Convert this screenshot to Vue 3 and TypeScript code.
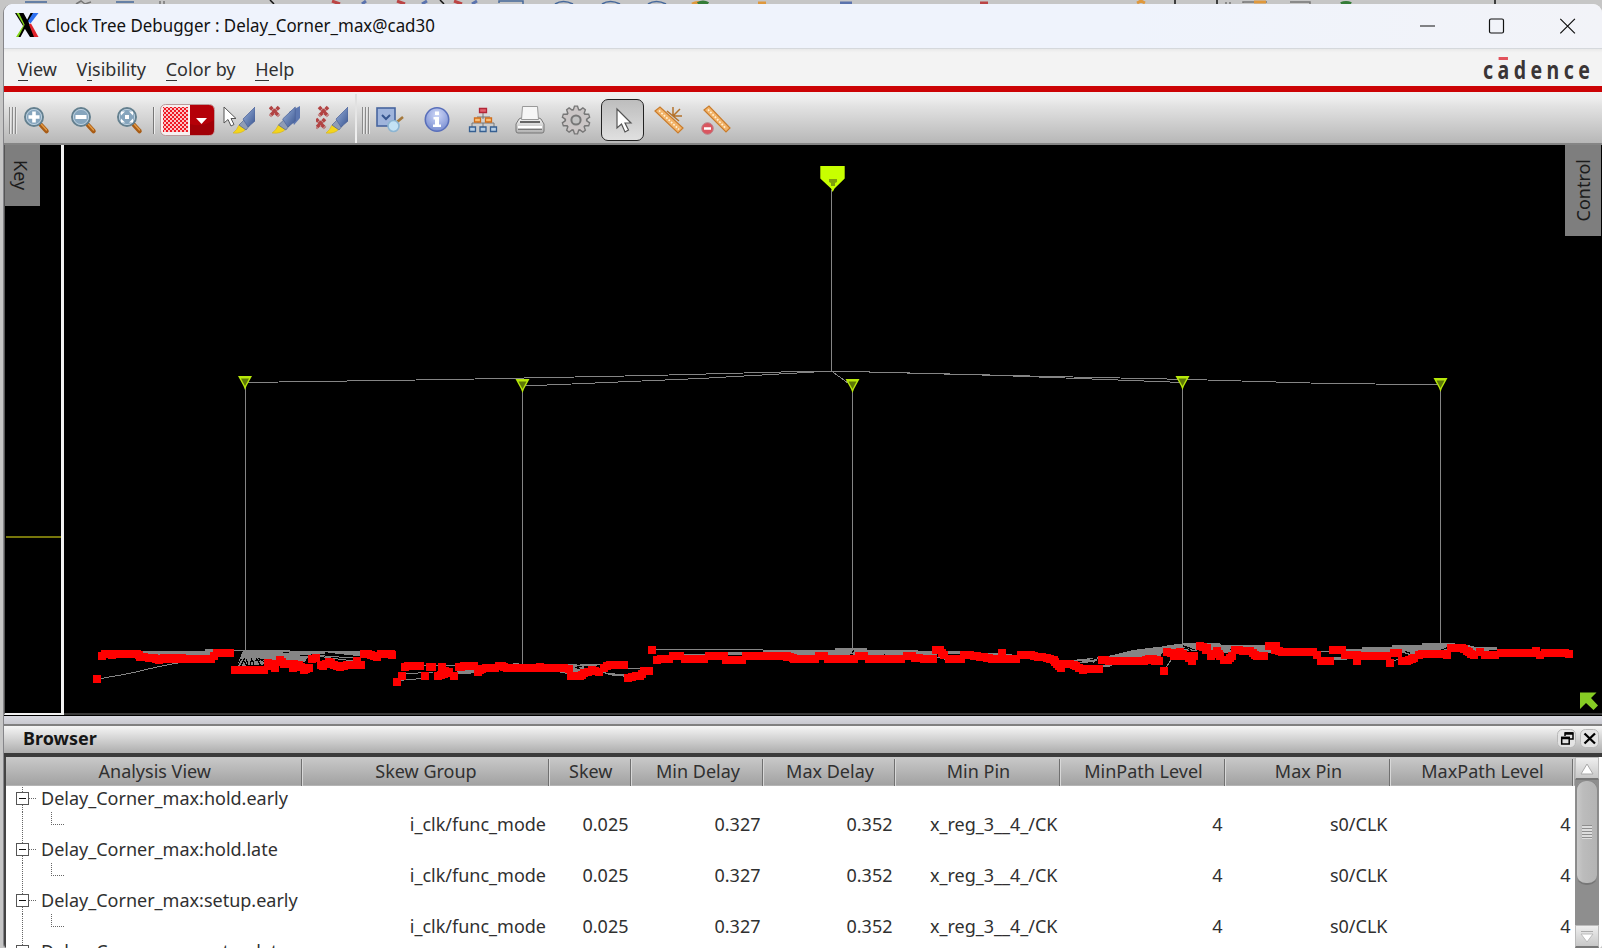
<script setup lang="ts">
interface Strip { dx: number; d: string }
interface Node { x: number; y: number; bottom: number }

const menus = [
  { key: 'V', before: '', after: 'iew' },
  { key: 'i', before: 'V', after: 'sibility' },
  { key: 'C', before: '', after: 'olor by' },
  { key: 'H', before: '', after: 'elp' },
]

const columns = ['Analysis View', 'Skew Group', 'Skew', 'Min Delay', 'Max Delay', 'Min Pin', 'MinPath Level', 'Max Pin', 'MaxPath Level']
const values = ['i_clk/func_mode', '0.025', '0.327', '0.352', 'x_reg_3__4_/CK', '4', 's0/CLK', '4']
const groups = ['hold.early', 'hold.late', 'setup.early', 'setup.late'].map(n => 'Delay_Corner_max:' + n)
const gearTeeth = [0, 36, 72, 108, 144]

const buffers: Node[] = [
  { x: 245, y: 376, bottom: 651 },
  { x: 522.5, y: 379, bottom: 664 },
  { x: 852.5, y: 379, bottom: 649 },
  { x: 1182.5, y: 376, bottom: 645 },
  { x: 1440.5, y: 378, bottom: 645 },
]

// Chains of sink centres, in thirds of a pixel from each strip's own origin.
const sinks: { dx: number; runs: string[] }[] = [
  { dx: 0, runs: ['305,77 315,71 335,73 350,70 410,70 420,80 445,82', '460,82 475,90 490,84 545,82', '500,87 632,87 640,76 650,67 690,69', '290,146', '705,119 790,119', '803,99 825,113', '814,100', '838,89 850,102 880,100', '877,113 895,105 910,118 925,112', '936,87 947,84', '962,104 968,108 985,95 1000,103 1020,110 1040,105 1082,104', '1070,92', '1092,70 1112,75 1130,80', '1142,70 1172,70 1176,73'] },
  { dx: 380, runs: ['50,155', '64,137', '75,110 90,106 120,106', '148,110 156,110', '135,137', '185,110', '195,122', '172,137 190,130 205,125', '220,137', '235,110 250,108 280,106', '292,124 305,115 345,112', '355,108 365,107 380,112 565,115', '478,110', '572,138 598,138 610,128 635,120 656,124', '672,112 690,105 730,105', '742,142 755,140 778,137 790,123 807,123', '815,60', '830,88 865,87', '878,77 900,77', '915,87 970,87', '985,77 1030,77', '1037,88 1085,88', '1098,77 1220,78 1240,85 1260,87'] },
  { dx: 780, runs: ['0,77 30,81 45,87 105,87', '116,77 130,77', '142,87 222,87', '235,77 252,77', '265,87 362,87', '380,77 395,77 405,82 430,87 457,87', '467,60 480,60 492,75', '507,87 542,87', '552,74 580,76 600,81 620,82 635,87 708,87', '664,69', '722,73 742,74 760,77 800,84 820,89 830,100 843,114', '852,100 880,104 895,112', '907,120', '915,115 956,115', '964,88 985,92 1090,92 1105,87 1130,88', '1150,123'] },
  { dx: 1140, runs: ['0,92 35,90 55,92', '80,65 92,68', '105,72 120,64 135,77 155,92', '100,77 162,77', '178,47 200,52', '198,60', '213,77 230,63 240,77', '250,88 263,88 274,78', '285,60 330,62 345,75', '350,78 370,78', '386,47 407,47', '405,60 425,65 518,66 530,73', '543,92 570,92', '578,59 605,60', '614,75 650,75', '650,92', '660,77 740,78', '748,97', '760,69 772,69', '785,93 800,93 815,85 822,84', '835,75 845,70 905,70 919,75', '933,52 965,53 980,62 992,70', '1002,73', '1020,65', '1035,74 1065,74', '1082,67 1175,68', '1187,61', '1200,73', '1215,68 1285,70'] },
]

// Stamps one square marker per step along a chain of points.
function stamp(run: string): string {
  const pts = run.split(' ').map(p => p.split(',').map(Number))
  const out: string[] = []
  const put = (x: number, y: number) => out.push(`M${Math.round((x - 11.5) / 3) * 3} ${Math.round((y - 11.5) / 3) * 3}h23v23h-23z`)
  put(pts[0][0], pts[0][1])
  for (let i = 1; i < pts.length; i++) {
    const [ax, ay] = pts[i - 1]
    const [bx, by] = pts[i]
    const n = Math.max(1, Math.ceil(Math.hypot(bx - ax, by - ay) / 14))
    for (let k = 1; k <= n; k++) put(ax + ((bx - ax) * k) / n, ay + ((by - ay) * k) / n)
  }
  return out.join('')
}
const sinkPaths: Strip[] = sinks.map(s => ({ dx: s.dx, d: s.runs.map(stamp).join('') }))

const fans: Strip[] = [
  { dx: 0, d: 'M415 62H615V57H640V80H430ZM730 60L870 59L872 63H1088V80L1000 70L930 72L915 95L800 88L790 104L710 108Z' },
  { dx: 380, d: 'M230 117L290 115V130L230 132ZM568 105H612V120L570 130ZM525 124H565V133ZM900 72H980V80H905ZM1030 67H1085V76H1035ZM1150 60H1260V84L1150 71ZM400 98h18v4h-18zM665 126L735 134V140L690 136Z' },
  { dx: 780, d: 'M0 60H165V54H262V60H380L470 64V84H0ZM495 62H565V72H495ZM600 68L664 70L720 76V84H600ZM855 92L955 82L1000 75L1060 60L1140 50L1250 40V64H1150L1140 80H960L940 100L880 98ZM965 104H1000L985 112H965Z' },
  { dx: 1140, d: 'M0 58L55 52L90 45L130 40H240L245 44L380 46V54L408 62V68H300L270 70L200 62L140 56L100 64L0 82ZM570 58H665V50H755L758 45H845V40H940L1000 48L1005 52H1070V57H1135V60H1070L1000 65L920 66L905 62H850L820 78L780 66H640L590 64ZM580 82H620V89H580Z' },
]

const fineLines: Strip[] = [
  { dx: 0, d: 'M300 146L390 130L440 118L500 105L535 99M695 62H735M890 72L1060 84M950 78L1080 96' },
  { dx: 380, d: 'M60 151L100 148L140 143M70 131L160 127M75 106H240M600 104H660M690 117H780M690 133H740M815 60H1150M560 104L650 107' },
  { dx: 780, d: 'M1158 113L1172 90M465 80L495 88M860 92L950 92' },
  { dx: 1140, d: 'M78 113L92 92M245 46H380M300 54H400M540 66H580M570 87H640M750 96L780 86M770 70L790 60' },
]

const gaps: Strip[] = [
  { dx: 0, d: 'M712 108L724 86M722 108L734 84M733 92L740 108M744 108L740 88M750 106L756 84M762 106L758 90M768 84L782 106M776 84L796 98M764 92L792 88M848 68H868M895 74L925 78M975 69H985M1000 78L1060 90M930 74L1060 76' },
  { dx: 380, d: 'M585 112L605 110M590 116H600' },
  { dx: 780, d: 'M216 68L222 62M210 75H218M312 73h4M895 95L915 91M925 92L950 84M925 97H940' },
  { dx: 1140, d: 'M125 60L140 52M138 52L155 66M130 48L165 60M270 58L300 62M905 60L925 52M795 64L810 70' },
]
</script>

<template>
  <div class="desktop">
    <svg class="behind" width="1602" height="6" viewBox="0 0 1602 6">
      <g fill="none" stroke-width="1.5">
        <path stroke="#47699b" d="M25 2h22M116 2h18M499 3V1h24v3M555 4q8-5 18 0M602 4q8-5 18 0M648 4q8-5 18 0" />
        <path stroke="#777" d="M76 4l5-3 4 3 6-2M1243 3V2h24M1290 2h20v2M1226 2v2M1230 2v2M160 1v3M164 1v3" />
        <path stroke="#b44" stroke-width="3" d="M332 1l8 3M397 1l8 3M454 1l8 3M980 3h8" />
        <path stroke="#5b73ad" stroke-width="3" d="M362 4l4-3M422 4l5-3M472 4l5-3M840 3h12" />
        <path stroke="#111" d="M1175 0v4M1217 0v4M1495 0v5M270 0l4 4M440 0l4 4" />
        <path stroke="#df983c" stroke-width="3" d="M692 4q6-3 10 0M758 3h8M1137 3l4-2 4 2M1254 2h12" />
        <path stroke="#347c37" stroke-width="4" d="M698 4q5-3 10 0M1341 4q5-2 10 0" />
      </g>
    </svg>
    <div class="window">
      <header class="titlebar">
        <svg class="xlogo" width="24" height="24" viewBox="0 0 24 24">
          <path fill="#000" d="M0 0h7.500l14.500 24h-7z" />
          <path fill="#83d61b" d="M1.500 0h3L11.500 12 4.500 24H1l7.500-12z" />
          <path fill="#000" d="M4 0h4.500l13 24h-6zM15.500 0h3L5.500 24h-2z" />
          <path fill="#2d70f0" d="M18 0h5.500L15.500 10.500 13 8z" />
          <path fill="#e0242c" d="M14 11.500l2-1L23.500 24H19z" />
        </svg>
        <span class="caption">Clock Tree Debugger : Delay_Corner_max@cad30</span>
        <svg class="winbtns" width="160" height="20" viewBox="0 0 160 20" fill="none" stroke="#111" stroke-width="1.2">
          <path d="M3 10h15" />
          <rect x="72.5" y="3" width="14" height="14" rx="1.5" />
          <path d="M143.300 2.800l14.600 14.600M157.900 2.800l-14.600 14.600" />
        </svg>
      </header>

      <nav class="menubar">
        <span v-for="m in menus" :key="m.key" class="menu">{{ m.before }}<span class="mnemonic">{{ m.key }}</span>{{ m.after }}</span>
        <span class="brand"><span class="brand-text">c<span class="macron">a</span>dence</span></span>
      </nav>

      <svg class="defs" width="0" height="0">
        <defs>
          <linearGradient id="brush" x1="0" y1="0" x2="1" y2="1"><stop offset="0" stop-color="#9bb3dc" /><stop offset="1" stop-color="#3b5691" /></linearGradient>
          <linearGradient id="metal" x1="0" y1="0" x2="0" y2="1"><stop offset="0" stop-color="#fafafa" /><stop offset="1" stop-color="#b0b0b0" /></linearGradient>
          <radialGradient id="info" cx=".5" cy=".3" r=".8"><stop offset="0" stop-color="#d0d8f8" /><stop offset="1" stop-color="#6c83cb" /></radialGradient>
          <pattern id="mesh" width="4" height="4" patternUnits="userSpaceOnUse"><path fill="#fbc4c6" d="M0 0h4v4H0z" /><path fill="#f01822" d="M0 0h2v2H0zM2 2h2v2H2z" /></pattern>
          <g id="lens">
            <path stroke="#a85c16" stroke-width="4.500" stroke-linecap="round" d="M22 21l5.500 6" />
            <path stroke="#e39a44" stroke-width="1.500" stroke-linecap="round" d="M22.500 20.500l5 5.500" />
            <circle cx="15" cy="13" r="9" fill="#86a5bd" stroke="#64808f" stroke-width="2" />
            <circle cx="15" cy="13" r="7.600" fill="none" stroke="#bcd0df" stroke-width="1" />
          </g>
          <g id="pen">
            <path fill="#f4d51c" stroke="#d4b422" stroke-width=".7" d="M0 27q4-3 6-8l7 4q-4 5-13 4z" />
            <path fill="#8f9cb5" stroke="#54678f" stroke-width=".7" d="M6 19l5-5 6 5-4 5z" />
            <path fill="url(#brush)" stroke="#4a6299" stroke-width=".7" d="M10 13L22 1v14l-7 6z" />
          </g>
          <path id="cross" fill="none" stroke="#b24343" stroke-width="3.600" stroke-dasharray="3.400 .6" d="M0 0l9 9M9 0L0 9" />
        </defs>
      </svg>

      <div class="toolbar">
        <i class="grip" />
        <span class="tool"><svg viewBox="0 0 32 32"><use href="#lens" /><path stroke="#fff" stroke-width="3.600" d="M9.500 13h11M15 7.500v11" /></svg></span>
        <span class="tool"><svg viewBox="0 0 32 32"><use href="#lens" /><path stroke="#fff" stroke-width="4" d="M9.500 13h11" /></svg></span>
        <span class="tool"><svg viewBox="0 0 32 32"><use href="#lens" /><path fill="#fff" d="M9 7.500h4l-4 4zM21 7.500v4l-4-4zM9 18.500v-4l4 4zM21 18.500h-4l4-4zM13 11h4v4h-4z" /></svg></span>
        <i class="rule" />
        <span class="swatch">
          <svg width="55" height="32" viewBox="0 0 55 32">
            <rect x=".5" y=".5" width="54" height="31" rx="5" fill="#f6f0f0" stroke="#b99" />
            <path fill="#b50008" d="M30 1h19q5 0 5 5v20q0 5-5 5H30z" />
            <path fill="#8d0006" d="M30 20q12 4 24-4v10q0 5-5 5H30z" opacity=".5" />
            <rect x="3" y="3" width="25" height="25" fill="url(#mesh)" shape-rendering="crispEdges" />
            <path fill="#fff" d="M36 14h11l-5.500 6z" />
          </svg>
        </span>
        <span class="tool"><svg viewBox="0 0 32 32"><path fill="#fff" stroke="#555" d="M1 3v16l4-3.500 3 6.500 3-1.500-3-6h5z" /><use href="#pen" x="10" y="2" /></svg></span>
        <span class="tool"><svg viewBox="0 0 32 32"><use href="#cross" x="1" y="3" /><path fill="#5d77b0" d="M20 8l11-6v12l-6 7z" /><use href="#pen" x="3" y="2" transform="scale(1.050 1)" /></svg></span>
        <span class="tool"><svg viewBox="0 0 32 32"><use href="#cross" x="3" y="3" /><use href="#cross" x="0" y="15" /><use href="#pen" x="10" y="2" /></svg></span>
        <i class="seam" />
        <i class="grip second" />
        <span class="tool"><svg viewBox="0 0 32 32"><rect x="3" y="4" width="18" height="18" fill="#9fb4dc" stroke="#47659f" stroke-width="1.600" /><path fill="none" stroke="#36558f" stroke-width="2" d="M8 11l4 4 4-4" /><path stroke="#a5793c" stroke-width="2.600" d="M23 18l6-5" /><circle cx="19.500" cy="22" r="5.500" fill="#c4e2f4" stroke="#8db5d2" stroke-width="1.600" /></svg></span>
        <span class="tool"><svg viewBox="0 0 32 32"><circle cx="16" cy="15.500" r="11.700" fill="url(#info)" stroke="#596fba" stroke-width="1.600" /><path fill="#fff" d="M14 7.500h4V11h-4zM12.500 13H18v7.500h2V23h-8v-2.500h2v-5h-1.500z" /></svg></span>
        <span class="tool"><svg viewBox="0 0 32 32"><path fill="none" stroke="#777" d="M16 9v6M10 13h13M5 23v-4h6M27 23v-4h-6M16 23v-4M11 15v4h10v-4" /><g stroke-width="1.300"><path fill="#e2606c" stroke="#b22637" d="M12.500 4.500h7v4h-7z" /><path fill="#f9bd73" stroke="#cf6d1b" d="M7.500 14h6v4h-6zM18.500 14h6v4h-6z" /><path fill="#b4cde5" stroke="#365f91" d="M2.500 23h6v4.500h-6zM13 23h6v4.500h-6zM23.500 23h6v4.500h-6z" /></g></svg></span>
        <span class="tool"><svg viewBox="0 0 32 32"><path fill="url(#metal)" stroke="#777" d="M5 15l4-2h14l4 2 3 5v7q0 2-2 2H4q-2 0-2-2v-7z" /><path fill="#f6f6f6" stroke="#999" d="M8.500 2.500h15l1 13h-17z" /><path stroke="#666" stroke-width="2" d="M6 18h20" /><path stroke="#fff" stroke-width="2" d="M4 23h24" /><path stroke="#777" d="M4 25.500h24" /></svg></span>
        <span class="tool"><svg viewBox="0 0 32 32">
          <path v-for="a in gearTeeth" :key="'o' + a" fill="#777" d="M12.500 6L14 1.500h4L19.500 6v20L18 30.500h-4L12.500 26z" :transform="`rotate(${a} 16 16)`" />
          <circle cx="16" cy="16" r="11.400" fill="#777" />
          <path v-for="a in gearTeeth" :key="'i' + a" fill="#cbc6c6" d="M14 6l1-3.200h2L18 6v20l-1 3.200h-2L14 26z" :transform="`rotate(${a} 16 16)`" />
          <circle cx="16" cy="16" r="10" fill="#cbc6c6" />
          <circle cx="16" cy="16" r="4.600" fill="#c2c2c2" stroke="#777" stroke-width="2" />
        </svg></span>
        <span class="tool pressed"><svg viewBox="0 0 32 32"><path fill="#fff" stroke="#555" stroke-width="1.200" d="M10 5v19l4.500-4 3.500 8 3.500-2-3.500-7h6z" /></svg></span>
        <span class="tool"><svg viewBox="0 0 32 32"><path fill="#f2b369" stroke="#c97c2c" stroke-width="1.200" d="M2 7l5-4 23 21-5 5z" /><path stroke="#fff0d4" stroke-width="1.700" stroke-dasharray="1.800 1.500" d="M6 6.500l20 19" /><path stroke="#b4722b" stroke-width="1.500" d="M20 12V3M20 12l7-7M20 12h9M20 12l-6-5M20 12l6 5" /></svg></span>
        <span class="tool"><svg viewBox="0 0 32 32"><path fill="#f2b369" stroke="#c97c2c" stroke-width="1.200" d="M4 6l5-4 21 22-4 4z" /><path stroke="#fff0d4" stroke-width="1.700" stroke-dasharray="1.800 1.500" d="M8 5.500l18 19" /><circle cx="7.500" cy="24.500" r="5.800" fill="#d95660" stroke="#bc8288" /><path stroke="#fff" stroke-width="2.600" d="M4 24.500h7" /></svg></span>
      </div>

      <main class="views">
        <aside class="keypane"><span class="tab left"><span class="vert">Key</span></span><i class="level" /></aside>
        <section class="canvas">
          <svg class="tree" width="1538" height="568" viewBox="64 144 1538 568">
            <g fill="none" stroke="#858585" shape-rendering="crispEdges">
              <path d="M831.500 190V371M245 382.500L450 379.500L650 375.500L800 371.500H832M522 386L560 384.500L700 378.500L832 371M832 371.500L848 383M832 371.500H850L1000 375.500L1183 382.500M850 371.500L1050 376.500L1190 379.500L1310 383L1440 385" />
              <path v-for="b in buffers" :key="b.x" :d="`M${b.x} ${b.y}V${b.bottom}`" />
            </g>
            <g v-for="(f, i) in fans" :key="'f' + i" :transform="`translate(${f.dx} 630) scale(.33333)`" shape-rendering="crispEdges">
              <path :d="f.d" fill="#858585" />
              <path :d="gaps[i].d" fill="none" stroke="#000" stroke-width="3.500" />
              <path :d="fineLines[i].d" fill="none" stroke="#858585" stroke-width="3" />
            </g>
            <path v-for="(s, i) in sinkPaths" :key="'s' + i" :d="s.d" :transform="`translate(${s.dx} 630) scale(.33333)`" fill="#f00" shape-rendering="crispEdges" />
            <path fill="#c8ff00" d="M820.300 166h24.400v12.500L834.500 188.500 832.700 192 831 188.500 820.300 178.500z" />
            <path fill="#7f9f0c" d="M829 179h8v3l-2 1v3h-4v-3l-2-1z" />
            <g v-for="b in buffers" :key="'b' + b.x">
              <path fill="#b7e80a" :d="`M${b.x - 7} ${b.y}h14l-5.500 10-1.500 4-1.500-4z`" />
              <path fill="#5e7807" :d="`M${b.x - 4} ${b.y + 2.5}h8l-4 7.500z`" />
            </g>
            <path fill="#86cc24" d="M1580 692.500h16.500l-5.500 5.500 7 7.500-4.500 4.500-7.500-7-6 6z" />
          </svg>
          <span class="tab right"><span class="vert up">Control</span></span>
        </section>
      </main>

      <section class="browser">
        <div class="dock">
          <span>Browser</span>
          <svg width="42" height="20" viewBox="0 0 42 20">
            <rect x=".5" y=".5" width="18" height="18" rx="5" fill="#e4e4e4" stroke="#b8b8b8" />
            <rect x="23.500" y=".5" width="18" height="18" rx="5" fill="#e4e4e4" stroke="#b8b8b8" />
            <path fill="none" stroke="#000" stroke-width="1.500" d="M8 7V4h8v6h-3M4.700 8.500h7.500V15H4.700z" />
            <path stroke="#000" stroke-width="2.500" d="M8 4.500h8M4 9h9" />
            <path stroke="#000" stroke-width="2.300" d="M27.500 4.500l10.500 10M38 4.500l-10.500 10" />
          </svg>
        </div>
        <div class="tablewrap">
          <div class="table">
            <div class="row head"><span v-for="c in columns" :key="c" class="th">{{ c }}</span></div>
            <div class="body">
              <template v-for="g in groups" :key="g">
                <div class="group">
                  <svg width="35" height="26" viewBox="0 0 35 26" shape-rendering="crispEdges">
                    <path fill="none" stroke="#666" stroke-dasharray="1 1" d="M16.500 1V26M23 12.500h8" />
                    <rect x="10.500" y="6.500" width="12" height="12" fill="#fff" stroke="#555" />
                    <path stroke="#111" stroke-width="1.500" d="M13 12.500h7" />
                  </svg><span>{{ g }}</span>
                </div>
                <div class="row">
                  <span class="branch"><svg width="70" height="26" viewBox="0 0 70 26" shape-rendering="crispEdges"><path fill="none" stroke="#666" stroke-dasharray="1 1" d="M16.500 0V26M45.500 0V12.500H59" /></svg></span>
                  <span v-for="(v, i) in values" :key="i" class="td">{{ v }}</span>
                </div>
              </template>
            </div>
          </div>
          <div class="scroll">
            <span class="arrow"><svg width="22" height="22" viewBox="0 0 22 22"><path fill="#fff" stroke="#aaa" d="M5 16L11 6l6 10z" /></svg></span>
            <span class="track"><span class="thumb"><i /></span></span>
            <span class="arrow"><svg width="22" height="22" viewBox="0 0 22 22"><path stroke="#aaa" d="M5 5.500h12" /><path fill="#fff" stroke="#bbb" d="M5 8h12l-6 8z" /></svg></span>
          </div>
        </div>
      </section>
    </div>
  </div>
</template>

<style>
html, body { margin: 0; overflow: hidden; }
</style>

<style scoped>
* { box-sizing: border-box; }
.desktop { position: relative; width: 1602px; height: 948px; padding: 4px 0 0 3px; overflow: hidden; background: #c6c6c6; font: 18px/25px "Noto Sans", "Open Sans", sans-serif; color: #303030; white-space: nowrap; }
.behind { position: absolute; left: 0; top: 0; }
.window { position: relative; display: flex; flex-direction: column; width: 1599px; height: 943.500px; overflow: hidden; border-left: 1px solid #858589; border-radius: 9px 9px 4px 4px; background: #f3f3f3; }
.titlebar { display: flex; align-items: center; flex: none; height: 45px; padding: 0 25px 0 11px; background: linear-gradient(90deg, #eff3fc 70%, #f2f3f8); border-bottom: 1px solid #d5d8dc; }
.xlogo { flex: none; margin-top: -2px; }
.caption { margin-left: 6px; margin-top: -2px; font-size: 17.600px; color: #111; transform: scaleX(.961); transform-origin: left; }
.winbtns { margin-left: auto; margin-top: -1px; }
.menubar { display: flex; align-items: center; flex: none; height: 37px; padding: 4px 9px 0 13.500px; background: linear-gradient(#e9e9e9, #f3f3f3 10%); }
.menu { margin-right: 19.700px; }
.mnemonic { box-shadow: 0 -1px 0 #333 inset; }
.brand { position: relative; width: 113px; height: 30px; margin-left: auto; }
.brand-text { position: absolute; left: 3px; top: 0; font-size: 25px; line-height: 28px; font-weight: 700; letter-spacing: 5.700px; transform: scaleX(.78); transform-origin: left; color: #3a3536; }
.macron { position: relative; }
.macron::before { content: ""; position: absolute; left: 1px; top: 5px; width: 12px; height: 3px; background: #e2525c; }
.defs { position: absolute; }
.toolbar { display: flex; align-items: center; flex: none; height: 59px; padding: 10px 0 0 4px; border-top: 6px solid #cc0305; border-bottom: 2px solid #858585; background: linear-gradient(#f1f1f1 0, #eee 12%, #e2e2e2 28%, #b7b7b7 100%); }
.grip { flex: none; width: 9px; height: 27px; margin: 0 -6px 5px 1px; background: repeating-linear-gradient(90deg, #8a8a8a 0 1px, #e8e8e8 1px 2px, transparent 2px 3px); }
.second { margin-right: -4px; }
.tool { display: flex; justify-content: center; align-items: center; flex: none; width: 46.500px; height: 42px; margin-bottom: 6px; }
.tool svg { width: 32px; height: 32px; }
.rule { width: 2px; height: 27px; margin: 0 5.500px 5px 1px; background: linear-gradient(90deg, #777 50%, #eee 50%); }
.swatch { width: 55.500px; height: 32px; margin-bottom: 6px; }
.seam { align-self: stretch; width: 2px; margin: -8px 4px 0 0; background: linear-gradient(#ddd, #f2f2f2); }
.pressed { width: 43px; margin: 0 2px 6px 1.500px; border: 1.500px solid #222; border-radius: 7px; background: linear-gradient(#bdbdbd, #e0e0e0); }
.views { display: flex; flex: none; height: 571px; background: #000; border-bottom: 1px solid #000; }
.keypane { position: relative; flex: none; width: 60px; border-right: 3px solid #f2f2f2; border-bottom: 2px solid #f2f2f2; border-left: 1px solid #555; }
.tab { display: flex; justify-content: center; align-items: center; background: #7e7e7e; color: #1c1c1c; }
.left { width: 35px; height: 61px; padding: 0 5px 1px 0; }
.vert { writing-mode: vertical-rl; }
.up { transform: rotate(180deg); }
.level { position: absolute; left: 1px; top: 391px; width: 55px; height: 2px; background: #77760b; }
.canvas { position: relative; flex: 1; border-bottom: 2px solid #3a3a3a; }
.tree { display: block; margin-top: -1px; }
.right { position: absolute; right: 1px; top: 0; width: 36px; height: 91px; padding: 0 0 1px 1px; }
.browser { display: flex; flex-direction: column; flex: 1; min-height: 0; padding-top: 8px; background: linear-gradient(#d9dae1 0, #c9c9d0 8px, #fff 8px); }
.dock { display: flex; align-items: center; flex: none; height: 33px; padding: 0 3px 2px 19px; border-top: 2px solid #808080; border-bottom: 4px solid #3b3b3b; background: linear-gradient(#f6f6f6, #adadad); font-weight: 700; color: #161616; }
.dock svg { margin-left: auto; }
.tablewrap { display: flex; flex: 1; min-height: 0; border-left: 2px solid #444; }
.table { width: 1569px; display: flex; flex-direction: column; min-height: 0; }
.row { display: grid; grid-template-columns: 295.500px 247px 82.500px 132px 132px 165px 165px 165px 1fr; }
.head { flex: none; height: 29px; padding-right: 2px; background: linear-gradient(#c9c9c9, #a2a2a2); border-bottom: 1px solid #b5b5b5; }
.th { display: flex; justify-content: center; align-items: center; margin-top: 2px; padding: 0 0 2px 3px; border-right: 1px solid #707070; box-shadow: 1px 0 0 #d8d8d8; }
.body { flex: 1; min-height: 0; overflow: hidden; background: #fff; }
.group { display: flex; align-items: center; height: 25.530px; overflow: hidden; }
.group svg { flex: none; }
.body .row { height: 25.530px; padding-right: 2px; }
.branch { height: 25.530px; }
.branch svg { display: block; }
.td { padding-right: 2.500px; text-align: right; }
.scroll { display: flex; flex-direction: column; flex: none; width: 24px; background: #8e8e8e; }
.arrow { flex: none; height: 23px; background: linear-gradient(#eee, #c8c8c8); border: 1px solid #bbb; border-bottom: 2px solid #777; }
.arrow svg { display: block; }
.track { flex: 1; padding: 0 1px; }
.thumb { display: flex; justify-content: center; align-items: center; height: 105px; border: 1px solid #8a8a8a; border-bottom: 2px solid #777; border-radius: 10px; background: linear-gradient(90deg, #c9c9c9, #bcbcbc 30%, #b4b4b4); }
.thumb i { width: 10px; height: 14px; background: repeating-linear-gradient(#8e8e8e 0 1px, #ddd 1px 3px); }
</style>
